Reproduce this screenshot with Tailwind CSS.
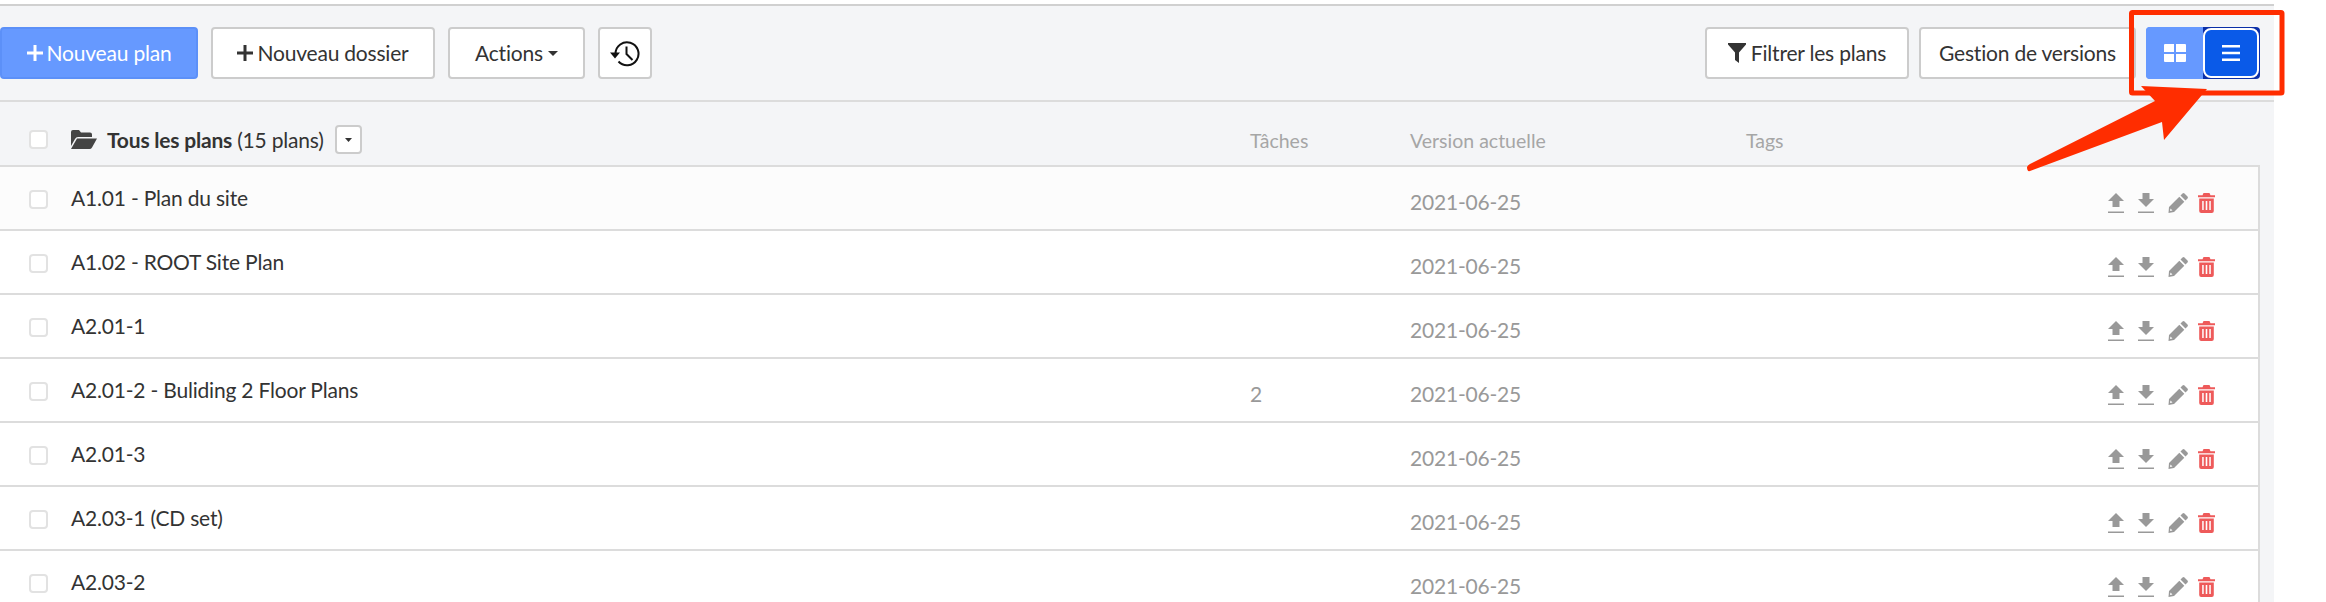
<!DOCTYPE html>
<html lang="fr">
<head>
  <meta charset="UTF-8" />
  <title>Plans</title>
  <script src="https://cdn.jsdelivr.net/npm/@tailwindcss/browser@4"></script>
</head>
<body class="relative h-[602px] w-[2326px] overflow-hidden bg-white font-['Lato',sans-serif] text-[21px] tracking-[-0.2px] text-[#333]">
  <svg class="hidden">
    <symbol id="up" viewBox="0 0 16 20"><path d="M8 0l8 8h-4.500v6h-7v-6H0z" fill="currentColor"/><rect y="18.500" width="16" height="1.500" fill="currentColor"/></symbol>
    <symbol id="down" viewBox="0 0 16 20"><path d="M4.500 0h7v6H16l-8 8-8-8h4.500z" fill="currentColor"/><rect y="18.500" width="16" height="1.500" fill="currentColor"/></symbol>
    <symbol id="pencil" viewBox="0 0 20 20"><path d="M14.500.5q1-.8 2 0l3 3q.8 1 0 2l-2 2-5-5zM11.300 3.700l5 5L6 19l-5.500 1L1 14zM2.500 15.500L2 18l2.500-.5z" fill="currentColor" fill-rule="evenodd"/></symbol>
    <symbol id="trash" viewBox="0 0 17 20"><path d="M5.500 0h6l1 2.200H17v2H0v-2h4.500zM1.200 5.500h14.600v12.500q0 2-2 2H3.200q-2 0-2-2zM4.200 8v9h1.500V8zM7.700 8v9h1.600V8zM11.300 8v9h1.500V8z" fill="currentColor" fill-rule="evenodd"/></symbol>
  </svg>

  <main class="mt-[4px] w-[2274px] border-t-2 border-[#d0d0d0] bg-[#f4f5f7]">
    <!-- Toolbar -->
    <div class="flex h-[96px] items-center justify-between border-b-2 border-[#dcdcdc] pr-[14px]">
      <div class="flex gap-[13px]">
        <button class="flex h-[52px] w-[198px] items-center justify-center gap-[4px] rounded-[4px] border-2 border-[#5c90f8] bg-[#6699ff] text-white">
          <svg class="h-[16px] w-[16px]" viewBox="0 0 16 16"><path d="M6.500 0h3v6.500H16v3H9.500V16h-3V9.500H0v-3h6.500z" fill="currentColor"/></svg>Nouveau plan
        </button>
        <button class="flex h-[52px] w-[224px] items-center justify-center gap-[4px] rounded-[4px] border-2 border-[#ccc] bg-white">
          <svg class="h-[16px] w-[16px]" viewBox="0 0 16 16"><path d="M6.500 0h3v6.500H16v3H9.500V16h-3V9.500H0v-3h6.500z" fill="currentColor"/></svg>Nouveau dossier
        </button>
        <button class="flex h-[52px] w-[137px] items-center justify-center gap-[5px] rounded-[4px] border-2 border-[#ccc] bg-white">
          Actions<svg class="h-[5px] w-[10px]" viewBox="0 0 10 5"><path d="M0 0h10L5 5z" fill="#333"/></svg>
        </button>
        <button class="flex h-[52px] w-[54px] items-center justify-center rounded-[4px] border-2 border-[#ccc] bg-white">
          <svg class="h-[27px] w-[30px]" viewBox="0 0 30 27" fill="none" stroke="#111" stroke-width="2"><path d="M5.500 13.500a11.500 11.500 0 1 1 3 8"/><path d="M16.500 6.500v7.500l6 6"/><path d="M0 12.500h10l-5 6z" fill="#111" stroke="none"/></svg>
        </button>
      </div>
      <div class="flex gap-[10px]">
        <button class="flex h-[52px] w-[204px] items-center justify-center gap-[5px] rounded-[4px] border-2 border-[#ccc] bg-white">
          <svg class="h-[20px] w-[18px]" viewBox="0 0 18 20"><path d="M0 0h18v1.500L11 9.500V20l-4-3V9.500L0 1.500z" fill="#333"/></svg>Filtrer les plans
        </button>
        <button class="h-[52px] w-[217px] rounded-[4px] border-2 border-[#ccc] bg-white">Gestion de versions</button>
        <div class="flex h-[52px] w-[114px] items-center rounded-[4px] bg-[linear-gradient(90deg,#6699ff_50%,#0b2fa8_50%)]">
          <button class="flex h-[52px] w-[57px] items-center justify-center rounded-l-[4px] bg-[#6699ff]">
            <svg class="h-[18px] w-[22px]" viewBox="0 0 22 18"><path d="M1 0h9v8H0V1q0-1 1-1zM12 0h9q1 0 1 1v7H12zM0 10h10v8H1q-1 0-1-1zM12 10h10v7q0 1-1 1h-9z" fill="#fff"/></svg>
          </button>
          <button class="flex h-[50px] w-[56px] items-center justify-center rounded-[8px] border-2 border-white bg-[#0a5ae8]">
            <svg class="h-[16px] w-[18px]" viewBox="0 0 18 16"><path d="M0 0h18v2.500H0zM0 6.700h18v2.500H0zM0 13.500h18V16H0z" fill="#fff"/></svg>
          </button>
        </div>
      </div>
    </div>

    <!-- Header row -->
    <div class="flex h-[63px] items-center pt-[12px]">
      <div class="flex w-[1250px] items-center">
        <span class="mr-[23px] ml-[29px] h-[19px] w-[19px] rounded-[4px] border-2 border-[#e2e2e2] bg-white"></span>
        <svg class="mr-[10px] h-[19px] w-[26px]" viewBox="0 0 26 19"><path d="M0 2q0-2 2-2h6l2 2.500h9q2 0 2 2V7H7q-2 0-3 2L0 16zM6 8.500h20l-5 9q-.8 1.500-2.500 1.500H0z" fill="#444"/></svg>
        <span class="font-bold">Tous les plans</span><span class="ml-[5px]">(15 plans)</span>
        <span class="ml-[11px] flex h-[29px] w-[27px] items-center justify-center rounded-[4px] border-2 border-[#ccc] bg-white"><svg class="h-[4px] w-[7px]" viewBox="0 0 7 4"><path d="M0 0h7L3.500 4z" fill="#333"/></svg></span>
      </div>
      <span class="mt-[2px] w-[160px] text-[19.500px] tracking-normal text-[#a6a6a6]">Tâches</span>
      <span class="mt-[2px] w-[336px] text-[19.500px] tracking-normal text-[#a6a6a6]">Version actuelle</span>
      <span class="mt-[2px] text-[19.500px] tracking-normal text-[#a6a6a6]">Tags</span>
    </div>

    <!-- Rows -->
    <div class="w-[2260px] border-t-2 border-r-2 border-[#dcdcdc] bg-white">
      <div class="flex h-[64px] items-center border-b-2 border-[#dcdcdc] bg-[#fcfcfc] pt-[3px]">
        <span class="mr-[23px] ml-[29px] h-[19px] w-[19px] rounded-[4px] border-2 border-[#e2e2e2] bg-white"></span>
        <span class="-mt-[4px] w-[1179px]">A1.01 - Plan du site</span>
        <span class="mt-[4px] w-[160px] text-[#999]"></span>
        <span class="mt-[4px] w-[698px] text-[#999]">2021-06-25</span>
        <span class="mt-[6px] flex gap-[14px] text-[#999]"><svg class="h-[20px] w-[16px]"><use href="#up"/></svg><svg class="h-[20px] w-[16px]"><use href="#down"/></svg><svg class="h-[20px] w-[20px]"><use href="#pencil"/></svg><svg class="-ml-[4px] h-[20px] w-[17px] text-[#ee5a5a]"><use href="#trash"/></svg></span>
      </div>
      <div class="flex h-[64px] items-center border-b-2 border-[#dcdcdc] pt-[3px]">
        <span class="mr-[23px] ml-[29px] h-[19px] w-[19px] rounded-[4px] border-2 border-[#e2e2e2] bg-white"></span>
        <span class="-mt-[4px] w-[1179px]">A1.02 - ROOT Site Plan</span>
        <span class="mt-[4px] w-[160px] text-[#999]"></span>
        <span class="mt-[4px] w-[698px] text-[#999]">2021-06-25</span>
        <span class="mt-[6px] flex gap-[14px] text-[#999]"><svg class="h-[20px] w-[16px]"><use href="#up"/></svg><svg class="h-[20px] w-[16px]"><use href="#down"/></svg><svg class="h-[20px] w-[20px]"><use href="#pencil"/></svg><svg class="-ml-[4px] h-[20px] w-[17px] text-[#ee5a5a]"><use href="#trash"/></svg></span>
      </div>
      <div class="flex h-[64px] items-center border-b-2 border-[#dcdcdc] pt-[3px]">
        <span class="mr-[23px] ml-[29px] h-[19px] w-[19px] rounded-[4px] border-2 border-[#e2e2e2] bg-white"></span>
        <span class="-mt-[4px] w-[1179px]">A2.01-1</span>
        <span class="mt-[4px] w-[160px] text-[#999]"></span>
        <span class="mt-[4px] w-[698px] text-[#999]">2021-06-25</span>
        <span class="mt-[6px] flex gap-[14px] text-[#999]"><svg class="h-[20px] w-[16px]"><use href="#up"/></svg><svg class="h-[20px] w-[16px]"><use href="#down"/></svg><svg class="h-[20px] w-[20px]"><use href="#pencil"/></svg><svg class="-ml-[4px] h-[20px] w-[17px] text-[#ee5a5a]"><use href="#trash"/></svg></span>
      </div>
      <div class="flex h-[64px] items-center border-b-2 border-[#dcdcdc] pt-[3px]">
        <span class="mr-[23px] ml-[29px] h-[19px] w-[19px] rounded-[4px] border-2 border-[#e2e2e2] bg-white"></span>
        <span class="-mt-[4px] w-[1179px]">A2.01-2 - Buliding 2 Floor Plans</span>
        <span class="mt-[4px] w-[160px] text-[#999]">2</span>
        <span class="mt-[4px] w-[698px] text-[#999]">2021-06-25</span>
        <span class="mt-[6px] flex gap-[14px] text-[#999]"><svg class="h-[20px] w-[16px]"><use href="#up"/></svg><svg class="h-[20px] w-[16px]"><use href="#down"/></svg><svg class="h-[20px] w-[20px]"><use href="#pencil"/></svg><svg class="-ml-[4px] h-[20px] w-[17px] text-[#ee5a5a]"><use href="#trash"/></svg></span>
      </div>
      <div class="flex h-[64px] items-center border-b-2 border-[#dcdcdc] pt-[3px]">
        <span class="mr-[23px] ml-[29px] h-[19px] w-[19px] rounded-[4px] border-2 border-[#e2e2e2] bg-white"></span>
        <span class="-mt-[4px] w-[1179px]">A2.01-3</span>
        <span class="mt-[4px] w-[160px] text-[#999]"></span>
        <span class="mt-[4px] w-[698px] text-[#999]">2021-06-25</span>
        <span class="mt-[6px] flex gap-[14px] text-[#999]"><svg class="h-[20px] w-[16px]"><use href="#up"/></svg><svg class="h-[20px] w-[16px]"><use href="#down"/></svg><svg class="h-[20px] w-[20px]"><use href="#pencil"/></svg><svg class="-ml-[4px] h-[20px] w-[17px] text-[#ee5a5a]"><use href="#trash"/></svg></span>
      </div>
      <div class="flex h-[64px] items-center border-b-2 border-[#dcdcdc] pt-[3px]">
        <span class="mr-[23px] ml-[29px] h-[19px] w-[19px] rounded-[4px] border-2 border-[#e2e2e2] bg-white"></span>
        <span class="-mt-[4px] w-[1179px]">A2.03-1 (CD set)</span>
        <span class="mt-[4px] w-[160px] text-[#999]"></span>
        <span class="mt-[4px] w-[698px] text-[#999]">2021-06-25</span>
        <span class="mt-[6px] flex gap-[14px] text-[#999]"><svg class="h-[20px] w-[16px]"><use href="#up"/></svg><svg class="h-[20px] w-[16px]"><use href="#down"/></svg><svg class="h-[20px] w-[20px]"><use href="#pencil"/></svg><svg class="-ml-[4px] h-[20px] w-[17px] text-[#ee5a5a]"><use href="#trash"/></svg></span>
      </div>
      <div class="flex h-[64px] items-center border-b-2 border-[#dcdcdc] pt-[3px]">
        <span class="mr-[23px] ml-[29px] h-[19px] w-[19px] rounded-[4px] border-2 border-[#e2e2e2] bg-white"></span>
        <span class="-mt-[4px] w-[1179px]">A2.03-2</span>
        <span class="mt-[4px] w-[160px] text-[#999]"></span>
        <span class="mt-[4px] w-[698px] text-[#999]">2021-06-25</span>
        <span class="mt-[6px] flex gap-[14px] text-[#999]"><svg class="h-[20px] w-[16px]"><use href="#up"/></svg><svg class="h-[20px] w-[16px]"><use href="#down"/></svg><svg class="h-[20px] w-[20px]"><use href="#pencil"/></svg><svg class="-ml-[4px] h-[20px] w-[17px] text-[#ee5a5a]"><use href="#trash"/></svg></span>
      </div>
    </div>
  </main>

  <!-- Red annotation over the screenshot -->
  <svg class="absolute top-0 left-0 h-[602px] w-[2326px]" viewBox="0 0 2326 602" fill="none">
    <rect x="2131.500" y="12.500" width="150.500" height="80.500" rx="1" stroke="#ff2d00" stroke-width="5"/>
    <path d="M2027 167q1-2 3-3l125-63-14-15 66 3-43 51-2-18-132 49q-3 1-3-4z" fill="#ff2d00"/>
  </svg>
</body>
</html>
